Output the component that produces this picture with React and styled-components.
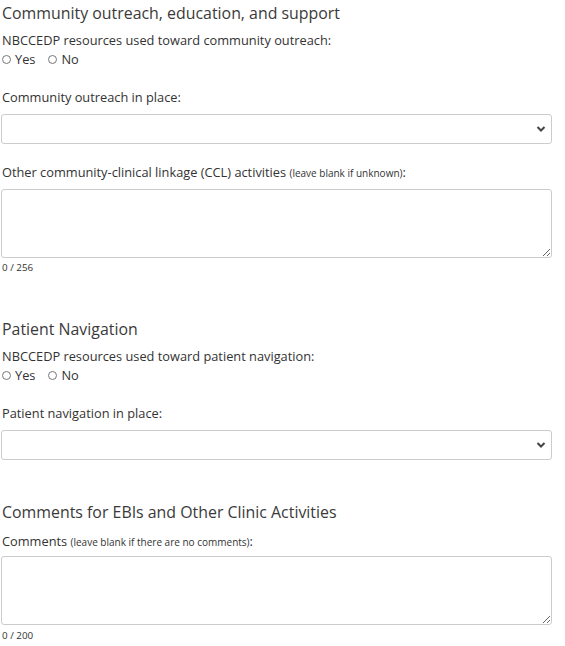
import React from "react";
import styled, { createGlobalStyle } from "styled-components";

const GlobalStyle = createGlobalStyle`
  html, body {
    margin: 0;
    padding: 0;
    background: #fff;
  }
  body {
    font-family: "Open Sans", "Noto Sans", sans-serif;
    color: #333;
  }
`;

const Page = styled.div`
  width: 565px;
  box-sizing: border-box;
  padding: 1px 13px 0 1px;
  display: flex;
  flex-direction: column;
`;

const Section = styled.section`
  display: flex;
  flex-direction: column;
  margin-top: ${(p) => p.$gap || 0}px;
`;

const Heading = styled.h2`
  margin: 0 0 6px 1px;
  font-size: 15.9px;
  line-height: 24px;
  font-weight: 400;
  color: #3a3a3a;
`;

const Label = styled.label`
  display: block;
  height: 18px;
  margin: ${(p) => p.$top || 0}px 0 ${(p) => p.$bottom || 0}px 1px;
  font-size: 12.8px;
  line-height: 18px;
  color: #333;
  white-space: nowrap;
`;

const Hint = styled.span`
  font-size: 10px;
  line-height: 1;
`;

const RadioRow = styled.div`
  display: flex;
  align-items: center;
  gap: 12px;
  height: 18px;
  margin-top: 1px;
  font-size: 12.8px;
  line-height: 18px;
`;

const RadioOption = styled.label`
  display: flex;
  align-items: center;
  gap: 4px;
`;

const RadioDot = styled.span`
  width: 9px;
  height: 9px;
  box-sizing: border-box;
  border: 1px solid #777;
  border-radius: 50%;
  margin-left: 1px;
`;

const SelectWrap = styled.div`
  position: relative;
  height: 30px;
`;

const Select = styled.select`
  appearance: none;
  width: 100%;
  height: 30px;
  box-sizing: border-box;
  border: 1px solid #ccc;
  border-radius: 3px;
  background: #fff;
  font-family: inherit;
  font-size: 13px;
  padding: 0 30px 0 8px;
  outline: none;
`;

const Chevron = styled.svg`
  position: absolute;
  right: 6px;
  top: 11px;
  pointer-events: none;
`;

const TextArea = styled.textarea`
  display: block;
  width: 100%;
  height: 69px;
  box-sizing: border-box;
  border: 1px solid #ccc;
  border-radius: 3px;
  resize: vertical;
  font-family: inherit;
  font-size: 13px;
  outline: none;
`;

const Counter = styled.div`
  margin: ${(p) => p.$top || 3}px 0 0 1px;
  font-size: 9.8px;
  line-height: 14px;
  color: #333;
`;

const YesNo = () => (
  <RadioRow>
    <RadioOption>
      <RadioDot />
      Yes
    </RadioOption>
    <RadioOption>
      <RadioDot />
      No
    </RadioOption>
  </RadioRow>
);

const Dropdown = () => (
  <SelectWrap>
    <Select defaultValue="">
      <option value=""></option>
    </Select>
    <Chevron width="10" height="8" viewBox="0 0 10 8">
      <path d="M1.5 2 L5 5.5 L8.5 2" fill="none" stroke="#444" strokeWidth="2" />
    </Chevron>
  </SelectWrap>
);

export default function App() {
  return (
    <>
      <GlobalStyle />
      <Page>
        <Section>
          <Heading>Community outreach, education, and support</Heading>
          <Label>NBCCEDP resources used toward community outreach:</Label>
          <YesNo />
          <Label $top={20} $bottom={8}>Community outreach in place:</Label>
          <Dropdown />
          <Label $top={19} $bottom={8}>
            Other community-clinical linkage (CCL) activities <Hint>(leave blank if unknown)</Hint>:
          </Label>
          <TextArea />
          <Counter>0 / 256</Counter>
        </Section>

        <Section $gap={42}>
          <Heading>Patient Navigation</Heading>
          <Label>NBCCEDP resources used toward patient navigation:</Label>
          <YesNo />
          <Label $top={20} $bottom={8}>Patient navigation in place:</Label>
          <Dropdown />
        </Section>

        <Section $gap={40}>
          <Heading>Comments for EBIs and Other Clinic Activities</Heading>
          <Label $top={2} $bottom={6}>
            Comments <Hint>(leave blank if there are no comments)</Hint>:
          </Label>
          <TextArea />
          <Counter $top={4}>0 / 200</Counter>
        </Section>
      </Page>
    </>
  );
}
